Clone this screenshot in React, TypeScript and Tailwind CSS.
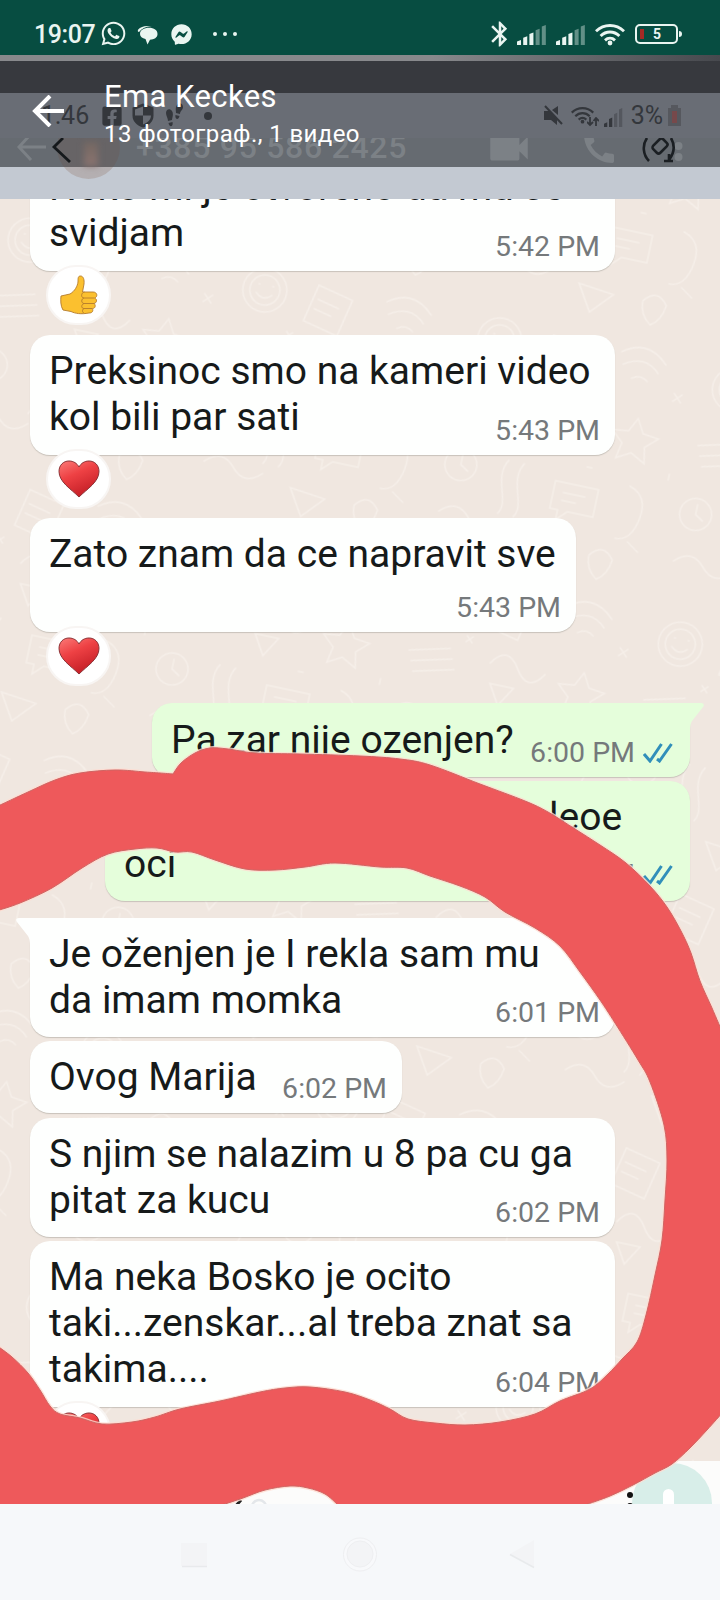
import type { ReactNode } from "react";
import { FaFacebookMessenger, FaFacebookSquare, FaWhatsapp } from "react-icons/fa";
import { MdBluetooth, MdCall, MdVideocam } from "react-icons/md";

type Point = [number, number];

// smooth open curve through the points
function curve(points: Point[]) {
  let d = "";
  for (let i = 0; i < points.length - 1; i++) {
    const p0 = points[Math.max(i - 1, 0)];
    const p1 = points[i];
    const p2 = points[i + 1];
    const p3 = points[Math.min(i + 2, points.length - 1)];
    d += `C${p1[0] + (p2[0] - p0[0]) / 6} ${p1[1] + (p2[1] - p0[1]) / 6} ${p2[0] - (p3[0] - p1[0]) / 6} ${p2[1] - (p3[1] - p1[1]) / 6} ${p2[0]} ${p2[1]}`;
  }
  return d;
}

const outerLeft: Point[] = [[-4, 807], [28, 792], [55, 780], [80, 773], [115, 770], [145, 772], [160, 773], [173, 774]];
const outerTop: Point[] = [
  [173, 774], [181, 763], [195, 753], [210, 748], [228, 749], [255, 753], [300, 754], [360, 756], [400, 759], [430, 765],
  [480, 784], [525, 801], [548, 812], [575, 829], [600, 845], [626, 863], [650, 886], [667, 907], [681, 931],
  [691, 953], [700, 981], [712, 1008], [724, 1036],
];
const outerBottom: Point[] = [[724, 1411], [707, 1430], [690, 1448], [672, 1464], [655, 1473], [633, 1485], [610, 1496], [585, 1505]];
const hump: Point[] = [[338, 1505], [325, 1494], [308, 1488], [290, 1486], [265, 1490], [243, 1498], [222, 1505]];
const inner: Point[] = [
  [-4, 1345], [12, 1357], [28, 1373], [40, 1390], [50, 1406], [60, 1414], [80, 1418], [102, 1424], [132, 1422], [155, 1417],
  [180, 1409], [220, 1401], [260, 1392], [285, 1388], [310, 1387], [345, 1392], [370, 1400], [390, 1409], [408, 1419],
  [435, 1423], [465, 1425], [500, 1422], [535, 1414], [560, 1401], [590, 1389], [608, 1374], [622, 1359], [637, 1342],
  [646, 1315], [655, 1275], [662, 1240], [665, 1200], [667, 1160], [664, 1125], [650, 1082], [638, 1060], [615, 1023],
  [600, 1000], [580, 972], [560, 946], [535, 928], [505, 912], [485, 897], [460, 886], [430, 876], [407, 868], [380, 867],
  [335, 863], [305, 867], [275, 870], [245, 869], [215, 860], [192, 852], [175, 852], [157, 848], [135, 849],
  [108, 854], [82, 868], [52, 888], [20, 903], [-4, 911],
];

const markerPath = `M-4 807${curve(outerLeft)}${curve(outerTop)}L724 1411${curve(outerBottom)}L338 1505${curve(hump)}L-4 1505L-4 1345${curve(inner)}Z`;

function Marker() {
  return (
    <svg className="pointer-events-none absolute inset-x-0 top-0" width="720" height="1504" viewBox="0 0 720 1504">
      <path d={markerPath} fill="none" stroke="#ffdcd1" strokeWidth="3.500" opacity="0.8" />
      <path d={markerPath} fill="#ee595b" stroke="#cf6563" strokeWidth="1" />
    </svg>
  );
}

function Signal({ className, bars, lit }: { className: string; bars: number; lit: number }) {
  return (
    <svg className={className} viewBox="0 0 31 20" preserveAspectRatio="none" fill="currentColor">
      {Array.from({ length: bars }, (_, i) => {
        const w = 31 / bars;
        const h = 5 + (15 * i) / (bars - 1);
        return <path key={i} opacity={i < lit ? 1 : 0.4} d={`M${i * w} 20v${-h + 1.5}l${w * 0.65} -1.5v${h}z`} />;
      })}
    </svg>
  );
}

function Wifi({ className }: { className: string }) {
  return (
    <svg className={className} viewBox="0 0 30 22" fill="none" stroke="currentColor" strokeWidth="2.900">
      <path d="M1 7.200C9-.4 21-.4 29 7.200M5.600 12C11 6.600 19 6.600 24.400 12M10 16.400c3-2.800 7-2.800 10 0" />
      <circle cx="15" cy="19" r="2.400" fill="currentColor" stroke="none" />
    </svg>
  );
}

function StatusBar() {
  return (
    <div className="flex h-[55px] items-start bg-[#074d41] pl-[34px] pt-[21px] text-[#eaf5f1]">
      <span className="w-[66px] text-[25px] font-medium leading-[28px] tracking-[-0.4px]">19:07</span>
      <FaWhatsapp className="-mt-px h-[27px] w-[27px]" />
      <svg className="ml-[10px] mt-[4px] h-[20px] w-[21px]" viewBox="0 0 21 20" fill="currentColor">
        <path d="M1.200 4.600C4 .8 10 .2 15 1.500 9 1.200 4.800 3.200 2 7 .8 7 .4 6 1.200 4.600z" />
        <path d="M12 2.800c5 0 8.500 2.400 8.500 6.100 0 3.600-3.400 5.500-7.500 5.800l-2.500 4.800-2-5.600C5.200 13 3 11.500 3 8.900c0-3.700 4-6.100 9-6.100z" />
      </svg>
      <FaFacebookMessenger className="ml-[13px] mt-[3px] h-[21px] w-[21px]" />
      <div className="ml-[21px] mt-[11px] flex gap-[6px]">
        <i className="h-1 w-1 rounded-full bg-current" />
        <i className="h-1 w-1 rounded-full bg-current" />
        <i className="h-1 w-1 rounded-full bg-current" />
      </div>
      <div className="ml-auto flex items-start pr-[38px]">
        <MdBluetooth className="-mt-[2px] h-[30px] w-[30px]" />
        <Signal className="ml-[2px] mt-[4px] h-[20px] w-[31px]" bars={5} lit={3} />
        <Signal className="ml-2 mt-[4px] h-[20px] w-[31px]" bars={5} lit={3} />
        <Wifi className="ml-2 mt-[3px] h-[22px] w-[30px]" />
        <div className="ml-[10px] mt-[3px] flex h-[20px] w-[43px] items-center rounded-[5px] border-2 border-current pl-[3px]">
          <i className="h-[10px] w-[4px] bg-[#a52a25]" />
          <span className="ml-[9px] text-[14px] font-bold leading-none">5</span>
        </div>
        <i className="ml-[1px] mt-[10px] h-[6px] w-[3px] rounded-r bg-current" />
      </div>
    </div>
  );
}

function ViewerHeader() {
  return (
    <div className="relative h-[144px]">
      <div className="h-[6px] bg-linear-to-r from-[#88898c] from-60% to-[#47494e] to-100%" />
      <div className="h-[32px] bg-[#37393e]" />
      <div className="h-[45px] bg-[#696d75]" />
      <div className="h-[29px] bg-[#666b71]" />
      <div className="h-[32px] bg-[#c3c9d2]" />

      {/* status row and chat header of the viewed photo */}
      <div className="absolute inset-x-0 top-[38px] flex h-[45px] items-center pl-[41px] pr-[38px] text-[#34373c]">
        <span className="w-[60px] text-[25px]">1:46</span>
        <FaFacebookSquare className="h-[22px] w-[22px]" />
        <svg className="ml-[8px] h-[27px] w-[24px]" viewBox="0 0 24 26">
          <path d="M12 1l10.500 4v8c0 6-4.500 10-10.500 12C6 23 1.500 19 1.500 13V5z" fill="#34373c" />
          <path d="M12 4v9H4V7zM12 13h8c0 4-3.500 7.500-8 9z" fill="#696d75" />
        </svg>
        <svg className="ml-[10px] h-[26px] w-[19px]" viewBox="0 0 19 26" fill="currentColor">
          <path d="M1 10c0-4 4-5 6-2s0 7 0 9l-4 1c0-3-2-5-2-8zM3.500 20l4-1c1 5-3 6-4 1zM18 4c0-4-4-5-6-2s-1 6-1 8l4 1c0-3 3-4 3-7zM14.500 13l-4-1c-1 4 3 6 4 1z" />
        </svg>
        <i className="ml-[20px] h-2 w-2 rounded-full bg-current" />
        <div className="ml-auto flex items-center">
          <svg className="h-[21px] w-[20px]" viewBox="0 0 20 21" fill="currentColor">
            <path d="M1 6h6l7 7v7l-6-5H1zM15 1v9l-6-5z" />
            <path d="M2 1l17 18" stroke="currentColor" strokeWidth="2" />
          </svg>
          <Wifi className="ml-[8px] h-[17px] w-[23px]" />
          <svg className="-ml-[7px] mt-3 h-[10px] w-[12px]" viewBox="0 0 12 10" fill="none" stroke="currentColor" strokeWidth="1.800">
            <path d="M3 0v8M0 5l3 3 3-3M9 9V1M6.500 4L9 1l3 3" />
          </svg>
          <Signal className="ml-[5px] mt-1 h-[19px] w-[20px]" bars={4} lit={2} />
          <span className="ml-[7px] text-[25px]">3%</span>
          <svg className="ml-[4px] h-[21px] w-[15px]" viewBox="0 0 15 21">
            <path d="M1 3h3V0h7v3h3v18H1z" fill="#56585e" />
            <rect x="5" y="6" width="5" height="12" fill="#77494b" />
          </svg>
        </div>
      </div>
      <div className="absolute inset-x-0 top-[83px] h-[45px] overflow-hidden text-[#7c8186]">
        <svg className="absolute left-[17px] top-0 h-[26px] w-[30px]" viewBox="0 0 30 26" fill="none" stroke="currentColor" strokeWidth="3">
          <path d="M29 9H3M13-3L2 9l12 13" />
        </svg>
        <div className="absolute left-[57px] top-[-22px] h-[63px] w-[63px] rounded-full bg-linear-to-b from-[#676466] from-81% to-[#b4afb1] to-81%" />
        <div className="absolute left-[84px] top-1 h-[24px] w-[14px] bg-linear-to-b from-[#746862] to-[#8b7470] blur-[3px]" />
        <svg className="absolute left-[51px] top-0 h-[26px] w-[22px]" viewBox="0 0 22 26" fill="none" stroke="#15191c" strokeWidth="2.800">
          <path d="M12 0L3 9l16 15" />
        </svg>
        <span className="absolute left-[136px] top-[-10px] whitespace-nowrap text-[32px] font-medium leading-[38px] tracking-[0.7px]">
          +385 95 586 2425
        </span>
        <MdVideocam className="absolute left-[484px] top-[-15px] h-[50px] w-[50px]" />
        <MdCall className="absolute left-[579px] top-[-10px] h-[40px] w-[40px]" />
        <svg className="absolute left-[640px] top-0 h-[26px] w-[44px]" viewBox="0 0 44 26" fill="none" stroke="#1b1f23" strokeWidth="2.600">
          <circle cx="38.500" cy="8" r="4" fill="#7c8186" stroke="none" />
          <circle cx="38.500" cy="19" r="4" fill="#7c8186" stroke="none" />
          <path d="M7 0C2 7 3 17 9 23M31 0c4 7 4 14-2 22M24 23h9M29 16v7" />
          <rect x="13" y="3" width="14" height="10" rx="2.500" transform="rotate(-45 20 8)" />
        </svg>
      </div>

      <div className="absolute inset-x-0 top-0 flex pl-[32px] text-white">
        <svg className="mt-[40px] h-[32px] w-[33px]" viewBox="0 0 33 32" fill="none" stroke="currentColor" strokeWidth="4">
          <path d="M32 16H4M18 1L3 16l15 15" />
        </svg>
        <div className="ml-[39px] whitespace-nowrap pt-[24px]">
          <h1 className="text-[31px] leading-[36px] tracking-[0.4px]">Ema Keckes</h1>
          <p className="mt-[5px] text-[24px] leading-[28px] tracking-[0.400px]">13 фотограф., 1 видео</p>
        </div>
      </div>
    </div>
  );
}

function Ticks() {
  return (
    <svg className="ml-[8px] h-[20px] w-[30px]" viewBox="0 0 30 20" fill="none" stroke="#318fba" strokeWidth="3">
      <path d="M1 11l6 7L18.500 1M14 16L16.500 18 28.500 1" />
    </svg>
  );
}

function Heart() {
  return (
    <svg className="h-[38px] w-[42px]" viewBox="0 0 42 38">
      <defs>
        <linearGradient id="heart" x1="0" y1="0" x2="0.5" y2="1">
          <stop offset="0" stopColor="#fb7b78" />
          <stop offset="0.45" stopColor="#ee4144" />
          <stop offset="1" stopColor="#c51f27" />
        </linearGradient>
      </defs>
      <path
        d="M21 37C13 29 1 22 1 11.500 1 5 5.500 1 11 1c4.500 0 8 2.300 10 6 2-3.700 5.500-6 10-6 5.500 0 10 4 10 10.500C41 22 29 29 21 37z"
        fill="url(#heart)"
        stroke="#8c3236"
        strokeWidth="1"
      />
    </svg>
  );
}

function Thumb() {
  return (
    <svg className="h-[40px] w-[38px]" viewBox="0 0 38 40" stroke="#b37a2c" strokeWidth="0.900" strokeLinejoin="round">
      <path
        d="M1 21l9-2c5-3 7.500-8 8-12 0-4 0-6 2.500-6 3 0 4 4 3.500 8l-1.500 8H33c4.500 0 5 5 1.500 6 3 1 2.500 5-.5 5.500 2 1.500 1.500 5-1.500 5 1 3-.5 4.500-3.500 4.500-8 1.500-14 .5-18-1.500L3 35C.5 31 .5 25 1 21z"
        fill="#fbc02f"
      />
      <path d="M34 23H24c-3 0-3.500-5 .5-6M34 28.500H24c-3 0-3-5 0-5.500M32 33.500h-8c-3 0-3-4 0-5M24 33.500c-2 1-2 4 0 4.500" fill="none" />
    </svg>
  );
}

function Bubble({
  out,
  className,
  leading = "pt-[13px] leading-[46px]",
  time,
  tail,
  reaction,
  children,
}: {
  out?: boolean;
  className: string;
  leading?: string;
  time: string;
  tail?: boolean;
  reaction?: ReactNode;
  children: ReactNode;
}) {
  return (
    <div
      className={`relative grid shrink-0 rounded-[20px] shadow-[0_1px_1px_rgba(110,110,100,0.3)] ${out ? "mr-[30px] self-end bg-[#e5fedb] pl-[19px] pr-[17px]" : "ml-[30px] bg-[#fefffe] pl-[19px] pr-[15px]"} ${className}`}
    >
      {tail && (
        <svg
          className={`absolute top-0 h-[28px] w-[38px] ${out ? "-right-[14px] text-[#e5fedb]" : "-left-[14px] -scale-x-100 text-[#fefffe]"}`}
          viewBox="0 0 38 28"
          fill="currentColor"
        >
          <path d="M0 0h35c3 0 3.500 2 2 4L26 18q-2 3-2 10H0z" />
        </svg>
      )}
      <p className={`relative col-start-1 row-start-1 whitespace-nowrap text-[39px] text-[#161a1a] ${leading}`}>{children}</p>
      <div className="relative col-start-1 row-start-1 flex items-center self-end justify-self-end pb-[8px] text-[28.500px] leading-[32px] text-[#75797b]">
        {time}
        {out && <Ticks />}
      </div>
      {reaction && (
        <div className="absolute left-[16px] top-[calc(100%-6px)] flex h-[60px] w-[65px] items-center justify-center rounded-full border-2 border-[#f8f5f3] bg-white">
          {reaction}
        </div>
      )}
    </div>
  );
}

function Wallpaper() {
  return (
    <svg className="absolute inset-0" width="720" height="1305">
      <defs>
        <pattern id="doodles" width="240" height="260" patternUnits="userSpaceOnUse" patternTransform="rotate(12)">
          <g fill="none" stroke="#f8f2ed" strokeWidth="1.500" strokeLinecap="round" opacity="0.7">
            <circle cx="38" cy="34" r="22" />
            <circle cx="38" cy="34" r="15" />
            <path d="M30 38q8 8 16 0M31 29h1M45 29h1" />
            <path d="M90 18l36 8-8 38-36-8zM92 32l22 5M90 42l18 4" />
            <path d="M160 20q24-18 46 4M164 32q20-14 36 2M175 44q8-6 16 0" />
            <path d="M14 96l40-10M18 106l40-10M22 116l40-10" />
            <path d="M96 92q14-22 28 0t28 0M100 112l12 20 12-20z" />
            <path d="M190 82l8 14 16 2-12 11 3 16-15-8-14 8 3-16-12-11 16-2z" />
            <circle cx="26" cy="164" r="16" />
            <path d="M26 154v10l8 5M72 150c-12 20 10 40 0 54M88 150c-12 20 10 40 0 54" />
            <path d="M122 160h44v28h-26l-10 10v-10h-8zM132 170h22M132 178h14" />
            <path d="M196 150q20 6 16 30t-20 24M205 205l12 8M14 214q16-16 30 0t30 0" />
            <path d="M104 222l16 26 20-22zM170 226q12-16 24 0-2 16-12 22-12-8-12-22z" />
            <path d="M220 50l8 8M228 50l-8 8M68 70l6 6M74 70l-6 6M150 140h5M232 130v6" />
          </g>
        </pattern>
      </defs>
      <rect width="720" height="1305" fill="url(#doodles)" />
    </svg>
  );
}

function Composer() {
  return (
    <div className="relative mt-[54px] flex h-[43px] shrink-0 overflow-hidden bg-[#fcfcfb]">
      <svg width="720" height="43" viewBox="0 0 720 43">
        <circle cx="672" cy="42" r="40" fill="#d8eee9" />
        <rect x="663" y="28" width="11" height="30" rx="5.500" fill="#fff" />
        <circle cx="630" cy="34" r="3" fill="#111" />
        <circle cx="630" cy="45" r="3" fill="#111" />
        <path d="M241 39l-7 8" stroke="#222" strokeWidth="3" />
        <circle cx="259" cy="46" r="7" fill="none" stroke="#e4e7ea" strokeWidth="2.500" />
      </svg>
    </div>
  );
}

function NavBar() {
  return (
    <div className="h-[96px] bg-[#f6f8fa]">
      <svg width="720" height="96" viewBox="0 0 720 96" fill="#f3f4f6">
        <rect x="181" y="39" width="26" height="23" />
        <path d="M182 62.500h25" stroke="#e8eaec" strokeWidth="1.500" />
        <circle cx="360" cy="50.500" r="16.500" fill="#f8f9fb" stroke="#eeeff1" />
        <circle cx="360" cy="50" r="13" stroke="#eeeff1" />
        <path d="M510 50l24-14v27z" />
        <path d="M510 50.500l24 13" stroke="#e8eaec" strokeWidth="1.500" />
      </svg>
    </div>
  );
}

export default function App() {
  return (
    <div className="relative h-[1600px] w-[720px] overflow-hidden font-['Roboto',sans-serif]">
      <StatusBar />
      <ViewerHeader />
      <main className="relative flex h-[1305px] flex-col items-start overflow-hidden bg-[#f0e7e0]">
        <Wallpaper />
        <Bubble className="-mt-[48px] h-[120px] w-[585px]" leading="pt-[14px] leading-[45.5px]" time="5:42 PM" reaction={<Thumb />}>
          Neko mi je otvoreno da mu se
          <br />
          svidjam
        </Bubble>
        <Bubble className="mt-[64px] h-[120px] w-[585px]" time="5:43 PM" reaction={<Heart />}>
          Preksinoc smo na kameri video
          <br />
          kol bili par sati
        </Bubble>
        <Bubble className="mt-[63px] h-[114px] w-[546px]" time="5:43 PM" reaction={<Heart />}>
          Zato znam da ce napravit sve
        </Bubble>
        <Bubble out tail className="mt-[71px] h-[74px] w-[538px]" leading="pt-[14px] leading-[46px]" time="6:00 PM">
          Pa zar nije ozenjen?
        </Bubble>
        <Bubble out className="mt-[4px] h-[120px] w-[585px] pb-[2px]" leading="pt-[13px] leading-[47px]" time="6:00 PM">
          <span className="pl-[425px]">leoe</span>
          <br />
          oci
        </Bubble>
        <Bubble tail className="mt-[17px] h-[119px] w-[585px]" time="6:01 PM">
          Je oženjen je I rekla sam mu
          <br />
          da imam momka
        </Bubble>
        <Bubble className="mt-[4px] h-[72px] w-[372px]" time="6:02 PM">
          Ovog Marija
        </Bubble>
        <Bubble className="mt-[5px] h-[119px] w-[585px]" time="6:02 PM">
          S njim se nalazim u 8 pa cu ga
          <br />
          pitat za kucu
        </Bubble>
        <Bubble className="mt-[4px] h-[166px] w-[585px]" time="6:04 PM" reaction={<Heart />}>
          Ma neka Bosko je ocito
          <br />
          taki...zenskar...al treba znat sa
          <br />
          takima....
        </Bubble>
        <Composer />
      </main>
      <NavBar />
      <Marker />
    </div>
  );
}
